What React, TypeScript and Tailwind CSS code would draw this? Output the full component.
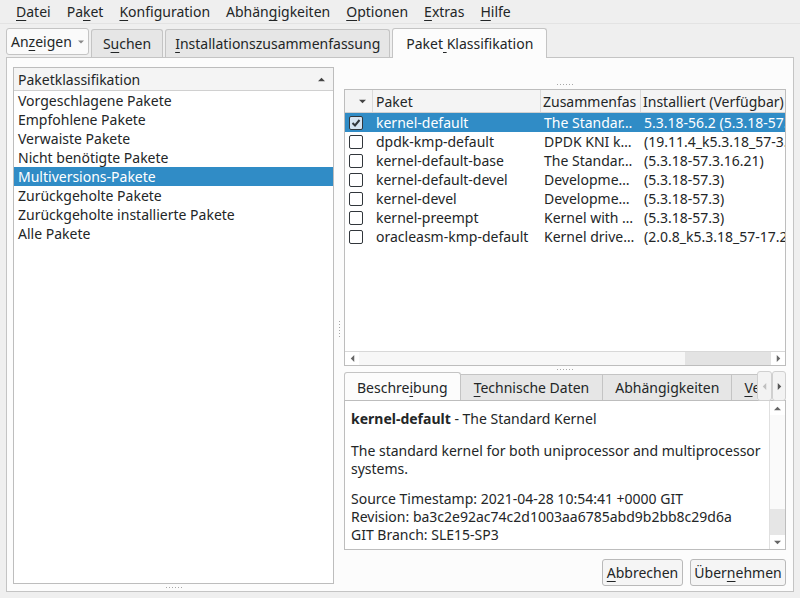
import React from 'react';

const U = ({ children }: { children: React.ReactNode }) => (
  <span className="underline decoration-1 underline-offset-[3px]">{children}</span>
);

const menu: [string, string, string][] = [
  ['', 'D', 'atei'],
  ['Pa', 'k', 'et'],
  ['', 'K', 'onfiguration'],
  ['Abhän', 'g', 'igkeiten'],
  ['', 'O', 'ptionen'],
  ['', 'E', 'xtras'],
  ['', 'H', 'ilfe'],
];

const classes = [
  'Vorgeschlagene Pakete',
  'Empfohlene Pakete',
  'Verwaiste Pakete',
  'Nicht benötigte Pakete',
  'Multiversions-Pakete',
  'Zurückgeholte Pakete',
  'Zurückgeholte installierte Pakete',
  'Alle Pakete',
];

const packages = [
  { name: 'kernel-default', summary: 'The Standar…', version: '5.3.18-56.2 (5.3.18-57.3)', checked: true },
  { name: 'dpdk-kmp-default', summary: 'DPDK KNI k…', version: '(19.11.4_k5.3.18_57-3.3.1)', checked: false },
  { name: 'kernel-default-base', summary: 'The Standar…', version: '(5.3.18-57.3.16.21)', checked: false },
  { name: 'kernel-default-devel', summary: 'Developme…', version: '(5.3.18-57.3)', checked: false },
  { name: 'kernel-devel', summary: 'Developme…', version: '(5.3.18-57.3)', checked: false },
  { name: 'kernel-preempt', summary: 'Kernel with …', version: '(5.3.18-57.3)', checked: false },
  { name: 'oracleasm-kmp-default', summary: 'Kernel drive…', version: '(2.0.8_k5.3.18_57-17.2)', checked: false },
];

const Dots = ({ vertical }: { vertical?: boolean }) => (
  <div className={vertical ? 'flex flex-col gap-[2px]' : 'flex gap-[2px]'}>
    {[0, 1, 2, 3, 4, 5].map((i) => (
      <div key={i} className="w-[1px] h-[1px] bg-[#a8a8a8]" />
    ))}
  </div>
);

const Tri = ({ dir, className }: { dir: 'up' | 'down' | 'left' | 'right'; className?: string }) => {
  const pts = {
    up: '0,6 4,2 8,6',
    down: '0,2 4,6 8,2',
    left: '6,0 2,4 6,8',
    right: '2,0 6,4 2,8',
  }[dir];
  return (
    <svg width="8" height="8" viewBox="0 0 8 8" className={className}>
      <polygon points={pts} fill="currentColor" />
    </svg>
  );
};

const Checkbox = ({ checked }: { checked: boolean }) => (
  <div
    className={`w-[14px] h-[14px] border-[1.5px] border-[#31363b] rounded-[2px] flex items-center justify-center ${
      checked ? 'bg-[#d6e4f1]' : 'bg-white'
    }`}
  >
    {checked && (
      <svg width="10" height="10" viewBox="0 0 10 10">
        <path d="M1.5 5 L4 7.5 L8.5 2" stroke="#31363b" strokeWidth="2" fill="none" />
      </svg>
    )}
  </div>
);

export default function App() {
  return (
    <div className="w-[800px] h-[598px] bg-[#efefef] text-[#232627] text-[14px] leading-[19px] font-['Noto_Sans',sans-serif] flex flex-col overflow-hidden">
      {/* menu bar */}
      <div className="h-[24px] flex items-center pl-[16px] gap-[16px] border-b border-[#e3e3e3]">
        {menu.map(([a, k, b]) => (
          <span key={a + k + b}>
            {a}
            <U>{k}</U>
            {b}
          </span>
        ))}
      </div>

      {/* top tabs */}
      <div className="h-[33px] flex items-end pl-[6px] gap-[2px]">
        <div className="h-[27px] mb-[2px] px-[4px] flex items-center gap-[6px] bg-[#fafafa] border border-[#c4c4c4] rounded-[3px]">
          <span>
            An<U>z</U>eigen
          </span>
          <Tri dir="down" className="text-[#888] w-[6px] h-[6px]" />
        </div>
        <div className="h-[28px] px-[11px] flex items-center bg-[#e6e6e6] border border-b-0 border-[#c4c4c4] rounded-t-[3px]">
          <span>
            S<U>u</U>chen
          </span>
        </div>
        <div className="h-[28px] px-[9px] flex items-center bg-[#e6e6e6] border border-b-0 border-[#c4c4c4] rounded-t-[3px]">
          <span>
            <U>I</U>nstallationszusammenfassung
          </span>
        </div>
        <div className="h-[30px] px-[13px] flex items-center bg-[#fcfcfc] border border-b-0 border-[#c4c4c4] rounded-t-[3px] relative top-[1px] z-10">
          <span>
            Paket<U>&nbsp;</U>Klassifikation
          </span>
        </div>
      </div>

      {/* tab panel */}
      <div className="ml-[6px] w-[788px] h-[535px] bg-[#fcfcfc] border border-[#c4c4c4] flex pt-[9px] pl-[6px]">
        {/* left */}
        <div className="w-[321px] flex flex-col">
          <div className="h-[517px] bg-white border border-[#bdbdbd] flex flex-col">
            <div className="h-[23px] flex items-center justify-between pl-[4px] pr-[8px] bg-[#f4f4f4] border-b border-[#d0d0d0]">
              <span>Paketklassifikation</span>
              <Tri dir="up" className="text-[#444] w-[7px] h-[7px]" />
            </div>
            {classes.map((c) => (
              <div
                key={c}
                className={`h-[19px] pl-[4px] flex items-center ${
                  c === 'Multiversions-Pakete' ? 'bg-[#308cc6] text-white' : ''
                }`}
              >
                {c}
              </div>
            ))}
          </div>
          <div className="h-[6px] flex items-center justify-center">
            <Dots />
          </div>
        </div>

        {/* splitter */}
        <div className="w-[10px] flex items-center justify-center">
          <Dots vertical />
        </div>

        {/* right */}
        <div className="w-[442px] flex flex-col">
          <div className="h-[22px] flex items-end justify-center pb-[4px]">
            <Dots />
          </div>

          {/* package table */}
          <div className="h-[277px] bg-white border border-[#bdbdbd] flex flex-col overflow-hidden">
            <div className="h-[23px] flex bg-[#f4f4f4] border-b border-[#d0d0d0] shrink-0">
              <div className="w-[28px] flex items-center justify-end pr-[6px] border-r border-[#dadada]">
                <Tri dir="down" className="text-[#444] w-[7px] h-[7px]" />
              </div>
              <div className="w-[168px] pl-[3px] flex items-center border-r border-[#dadada]">Paket</div>
              <div className="w-[100px] pl-[2px] flex items-center border-r border-[#dadada] overflow-hidden whitespace-nowrap">
                Zusammenfas
              </div>
              <div className="flex-1 pl-[2px] flex items-center overflow-hidden whitespace-nowrap">
                Installiert (Verfügbar)
              </div>
            </div>
            <div className="flex-1">
              {packages.map((p, i) => (
                <div
                  key={p.name}
                  className={`h-[19px] flex items-center whitespace-nowrap ${
                    i === 0 ? 'bg-[#308cc6] text-white' : ''
                  }`}
                >
                  <div className="w-[28px] pl-[4px] flex items-center">
                    <Checkbox checked={p.checked} />
                  </div>
                  <div className="w-[168px] pl-[3px]">{p.name}</div>
                  <div className="w-[100px] pl-[3px] overflow-hidden">{p.summary}</div>
                  <div className="flex-1 pl-[3px] overflow-hidden">{p.version}</div>
                </div>
              ))}
            </div>
            <div className="h-[14px] flex items-center border-t border-[#d8d8d8] shrink-0 text-[#666]">
              <div className="w-[14px] flex justify-center">
                <Tri dir="left" className="w-[7px] h-[7px]" />
              </div>
              <div className="w-[326px] h-full bg-[#f7f7f7]" />
              <div className="flex-1 h-full bg-[#e3e3e3]" />
              <div className="w-[14px] flex justify-center">
                <Tri dir="right" className="w-[7px] h-[7px]" />
              </div>
            </div>
          </div>

          <div className="h-[6px] flex items-center justify-center">
            <Dots />
          </div>

          {/* details tabs */}
          <div className="h-[28px] flex items-end">
            <div className="w-[414px] flex items-end overflow-hidden whitespace-nowrap">
              <div className="h-[29px] px-[12px] flex items-center bg-[#fcfcfc] border border-b-0 border-[#c4c4c4] rounded-t-[3px] shrink-0 relative top-[1px]">
                <span>
                  Beschre<U>i</U>bung
                </span>
              </div>
              <div className="h-[26px] px-[13px] flex items-center bg-[#e6e6e6] border border-b-0 border-l-0 border-[#c4c4c4] shrink-0">
                <span>
                  <U>T</U>echnische Daten
                </span>
              </div>
              <div className="h-[26px] px-[12px] flex items-center bg-[#e6e6e6] border border-b-0 border-l-0 border-[#c4c4c4] shrink-0">
                <span>Abhängigkeiten</span>
              </div>
              <div className="h-[26px] px-[12px] flex items-center bg-[#e6e6e6] border border-b-0 border-l-0 border-[#c4c4c4] shrink-0">
                <span>
                  <U>V</U>ersionen
                </span>
              </div>
            </div>
            <div className="h-[30px] w-[15px] flex items-center justify-center bg-[#f3f3f3] border border-[#d0d0d0] rounded-[3px] text-[#c0c0c0] relative top-[1px]">
              <Tri dir="left" className="w-[7px] h-[7px]" />
            </div>
            <div className="h-[30px] w-[14px] flex items-center justify-center bg-[#f3f3f3] border border-[#d0d0d0] rounded-[3px] text-[#555] relative top-[1px]">
              <Tri dir="right" className="w-[7px] h-[7px]" />
            </div>
          </div>

          {/* description */}
          <div className="h-[150px] bg-white border border-[#bdbdbd] flex">
            <div className="flex-1 pl-[6px] pt-[9px] leading-[18px]">
              <div>
                <b className="font-bold">kernel-default</b> - The Standard Kernel
              </div>
              <div className="mt-[14px]">The standard kernel for both uniprocessor and multiprocessor systems.</div>
              <div className="mt-[12px]">Source Timestamp: 2021-04-28 10:54:41 +0000 GIT</div>
              <div>Revision: ba3c2e92ac74c2d1003aa6785abd9b2bb8c29d6a</div>
              <div>GIT Branch: SLE15-SP3</div>
            </div>
            <div className="w-[16px] flex flex-col border-l border-[#e0e0e0] text-[#666]">
              <div className="h-[14px] flex items-center justify-center">
                <Tri dir="up" className="w-[7px] h-[7px]" />
              </div>
              <div className="flex-1 bg-[#fafafa]" />
              <div className="h-[26px] bg-[#e6e6e6]" />
              <div className="h-[14px] flex items-center justify-center">
                <Tri dir="down" className="w-[7px] h-[7px]" />
              </div>
            </div>
          </div>

          {/* buttons */}
          <div className="mt-[9px] flex justify-end gap-[7px]">
            <div className="h-[27px] w-[81px] flex items-center justify-center bg-[#f5f5f5] border border-[#b9b9b9] rounded-[3px]">
              <span>
                <U>A</U>bbrechen
              </span>
            </div>
            <div className="h-[27px] w-[96px] flex items-center justify-center bg-[#f5f5f5] border border-[#b9b9b9] rounded-[3px]">
              <span>
                Über<U>n</U>ehmen
              </span>
            </div>
          </div>
        </div>
      </div>
    </div>
  );
}
